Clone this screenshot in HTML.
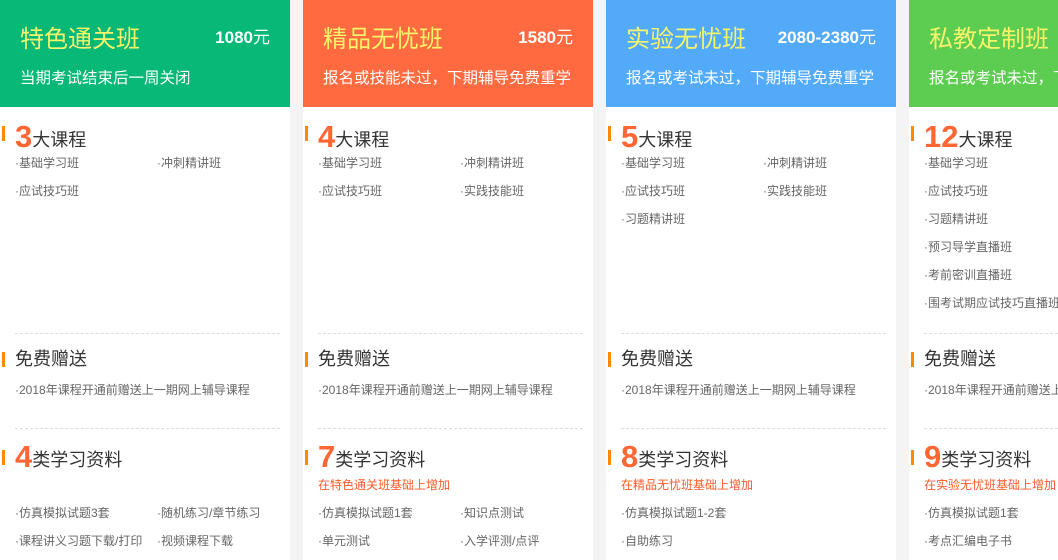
<!DOCTYPE html>
<html><head><meta charset="utf-8"><style>
*{margin:0;padding:0;box-sizing:border-box}
html,body{width:1058px;height:560px;overflow:hidden}
body{background:#f4f4f4;font-family:"Liberation Sans","Noto Sans CJK SC",sans-serif;position:relative}
.col{position:absolute;top:0;width:290px;height:560px;background:#fff;overflow:hidden}
.hd{position:absolute;left:0;top:0;width:290px;height:107px}
.t{position:absolute;left:20px;top:24px;font-size:24px;color:#f8f46a;line-height:32px;white-space:nowrap}
.p{position:absolute;right:20px;top:28px;font-size:17px;font-weight:bold;color:#fff;line-height:20px;white-space:nowrap}
.p span{font-weight:normal}
.s{position:absolute;left:20px;top:68px;font-size:15.5px;color:#fff;line-height:22px;white-space:nowrap}
.bar{position:absolute;left:2px;width:3px;height:15px;background:#ff8a00}
.h{position:absolute;left:15px;font-size:18px;color:#333;line-height:24px;white-space:nowrap}
.h b{font-size:31px;color:#ff6633;font-family:"Liberation Sans",sans-serif;font-weight:bold;line-height:30px;vertical-align:-1px}
.i{position:absolute;font-size:12px;color:#666;line-height:16px;white-space:nowrap}
.r{position:absolute;left:15px;font-size:12px;color:#ff5a2a;line-height:16px;white-space:nowrap}
.d{position:absolute;left:15px;width:265px;border-top:1px dashed #ddd}
</style></head><body>

<div class="col" style="left:0">
<div class="hd" style="background:#07b876"><div class="t">特色通关班</div><div class="p">1080<span>元</span></div><div class="s">当期考试结束后一周关闭</div></div>
<div class="bar" style="top:126px"></div><div class="h" style="top:122px"><b>3</b>大课程</div>
<div class="i" style="left:15px;top:155px">·基础学习班</div><div class="i" style="left:157px;top:155px">·冲刺精讲班</div>
<div class="i" style="left:15px;top:183px">·应试技巧班</div>
<div class="d" style="top:333px"></div>
<div class="bar" style="top:352px"></div><div class="h" style="top:347px">免费赠送</div>
<div class="i" style="left:15px;top:382px">·2018年课程开通前赠送上一期网上辅导课程</div>
<div class="d" style="top:428px"></div>
<div class="bar" style="top:450px"></div><div class="h" style="top:442px"><b>4</b>类学习资料</div>
<div class="i" style="left:15px;top:505px">·仿真模拟试题3套</div><div class="i" style="left:157px;top:505px">·随机练习/章节练习</div>
<div class="i" style="left:15px;top:533px">·课程讲义习题下载/打印</div><div class="i" style="left:157px;top:533px">·视频课程下载</div>
</div>

<div class="col" style="left:303px">
<div class="hd" style="background:#ff6a40"><div class="t">精品无忧班</div><div class="p">1580<span>元</span></div><div class="s">报名或技能未过，下期辅导免费重学</div></div>
<div class="bar" style="top:126px"></div><div class="h" style="top:122px"><b>4</b>大课程</div>
<div class="i" style="left:15px;top:155px">·基础学习班</div><div class="i" style="left:157px;top:155px">·冲刺精讲班</div>
<div class="i" style="left:15px;top:183px">·应试技巧班</div><div class="i" style="left:157px;top:183px">·实践技能班</div>
<div class="d" style="top:333px"></div>
<div class="bar" style="top:352px"></div><div class="h" style="top:347px">免费赠送</div>
<div class="i" style="left:15px;top:382px">·2018年课程开通前赠送上一期网上辅导课程</div>
<div class="d" style="top:428px"></div>
<div class="bar" style="top:450px"></div><div class="h" style="top:442px"><b>7</b>类学习资料</div>
<div class="r" style="top:477px">在特色通关班基础上增加</div>
<div class="i" style="left:15px;top:505px">·仿真模拟试题1套</div><div class="i" style="left:157px;top:505px">·知识点测试</div>
<div class="i" style="left:15px;top:533px">·单元测试</div><div class="i" style="left:157px;top:533px">·入学评测/点评</div>
</div>

<div class="col" style="left:606px">
<div class="hd" style="background:#52aaf8"><div class="t">实验无忧班</div><div class="p">2080-2380<span>元</span></div><div class="s">报名或考试未过，下期辅导免费重学</div></div>
<div class="bar" style="top:126px"></div><div class="h" style="top:122px"><b>5</b>大课程</div>
<div class="i" style="left:15px;top:155px">·基础学习班</div><div class="i" style="left:157px;top:155px">·冲刺精讲班</div>
<div class="i" style="left:15px;top:183px">·应试技巧班</div><div class="i" style="left:157px;top:183px">·实践技能班</div>
<div class="i" style="left:15px;top:211px">·习题精讲班</div>
<div class="d" style="top:333px"></div>
<div class="bar" style="top:352px"></div><div class="h" style="top:347px">免费赠送</div>
<div class="i" style="left:15px;top:382px">·2018年课程开通前赠送上一期网上辅导课程</div>
<div class="d" style="top:428px"></div>
<div class="bar" style="top:450px"></div><div class="h" style="top:442px"><b>8</b>类学习资料</div>
<div class="r" style="top:477px">在精品无忧班基础上增加</div>
<div class="i" style="left:15px;top:505px">·仿真模拟试题1-2套</div>
<div class="i" style="left:15px;top:533px">·自助练习</div>
</div>

<div class="col" style="left:909px;width:149px">
<div class="hd" style="background:#5ccd50;width:149px"><div class="t">私教定制班</div><div class="s">报名或考试未过，下期辅导免费重学</div></div>
<div class="bar" style="top:126px"></div><div class="h" style="top:122px"><b>12</b>大课程</div>
<div class="i" style="left:15px;top:155px">·基础学习班</div>
<div class="i" style="left:15px;top:183px">·应试技巧班</div>
<div class="i" style="left:15px;top:211px">·习题精讲班</div>
<div class="i" style="left:15px;top:239px">·预习导学直播班</div>
<div class="i" style="left:15px;top:267px">·考前密训直播班</div>
<div class="i" style="left:15px;top:295px">·围考试期应试技巧直播班</div>
<div class="d" style="top:333px;width:134px"></div>
<div class="bar" style="top:352px"></div><div class="h" style="top:347px">免费赠送</div>
<div class="i" style="left:15px;top:382px">·2018年课程开通前赠送上一期网上辅导课程</div>
<div class="d" style="top:428px;width:134px"></div>
<div class="bar" style="top:450px"></div><div class="h" style="top:442px"><b>9</b>类学习资料</div>
<div class="r" style="top:477px">在实验无忧班基础上增加</div>
<div class="i" style="left:15px;top:505px">·仿真模拟试题1套</div>
<div class="i" style="left:15px;top:533px">·考点汇编电子书</div>
</div>

</body></html>
